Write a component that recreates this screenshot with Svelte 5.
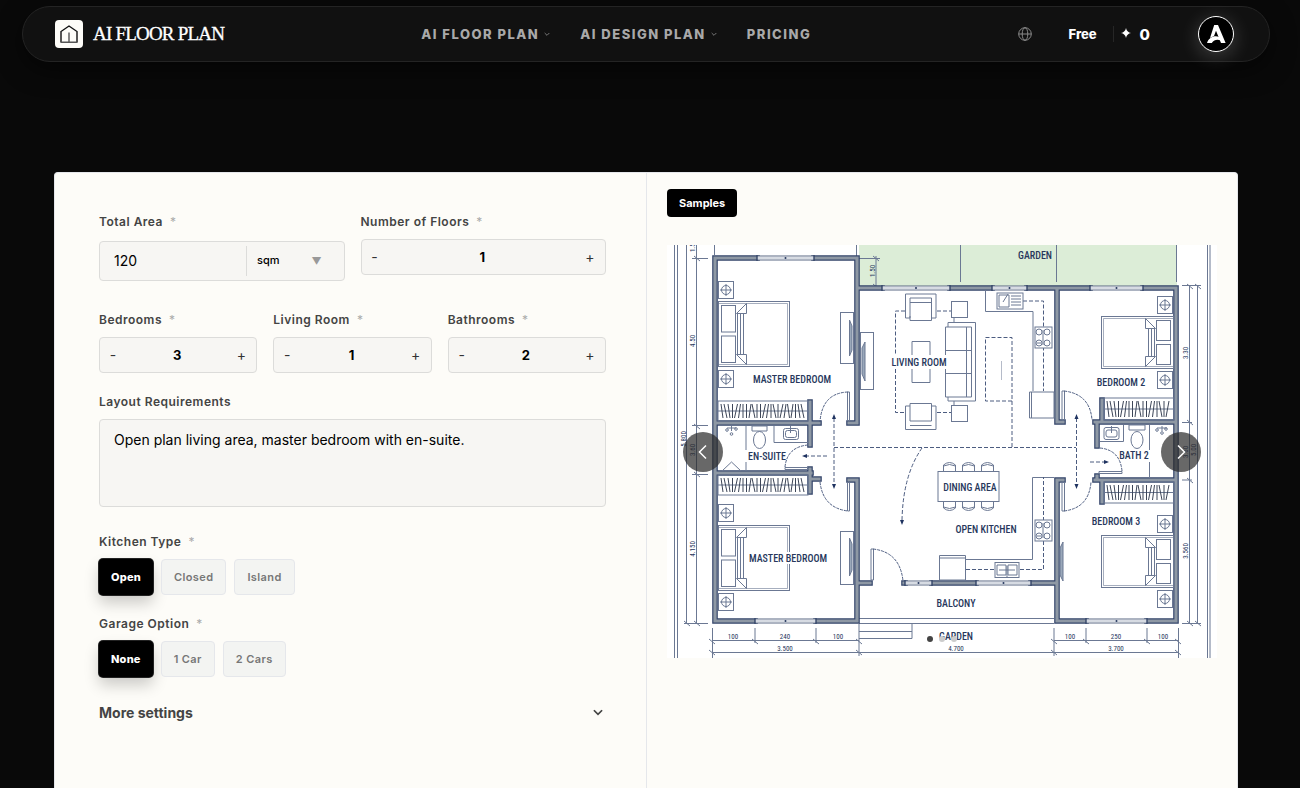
<script lang="ts">
    type Stepper = { id: string; label: string; value: number };

    const NAV = [
        { label: 'AI FLOOR PLAN', menu: true },
        { label: 'AI DESIGN PLAN', menu: true },
        { label: 'PRICING', menu: false },
    ];
    const KITCHENS = ['Open', 'Closed', 'Island'];
    const GARAGES = ['None', '1 Car', '2 Cars'];

    let area     = $state('120');
    let unit     = $state('sqm');
    let floors   = $state<Stepper>({ id: 'floors', label: 'Number of Floors', value: 1 });
    let rooms    = $state<Stepper[]>([
        { id: 'bedrooms', label: 'Bedrooms', value: 3 },
        { id: 'living', label: 'Living Room', value: 1 },
        { id: 'bathrooms', label: 'Bathrooms', value: 2 },
    ]);
    let layout   = $state('Open plan living area, master bedroom with en-suite.');
    let kitchen  = $state('Open');
    let garage   = $state('None');
    let slide    = $state(0);
    let moreOpen = $state(false);

    // Floor plan drawing data, in plan units
    const WALLS = [
        'M755 621H715V258H757M814 258H857V423H849M849 480H857V621H816',
        'M715 423H819M810 402V445M715 473H811M810 469V492M811 479H819',
        'M857 288H882M950 288H992M1027 288H1090M1143 288H1176V621H1147M1086 621H1057V480H1063',
        'M1057 288V422H1063M1095 422H1176M1097 422V446M1102 400V422',
        'M1095 480H1176M1097 476V480M1102 480V502',
        'M857 583H870M904 583H905M932 583H976M1031 583H1057',
    ].join('');
    const WINDOWS = [
        [757, 258, 57], [755, 621, 61], [882, 288, 68], [992, 288, 35],
        [1090, 288, 53], [1086, 621, 61], [905, 583, 27], [976, 583, 55],
    ];
    const TABLES = [
        [726, 290], [726, 379], [726, 513], [726, 602],
        [1165, 305], [1165, 380], [1165, 524], [1165, 599],
    ];
    const ROOMS = [
        ['MASTER BEDROOM', 792, 383], ['MASTER BEDROOM', 788, 562], ['LIVING ROOM', 919, 366],
        ['BEDROOM 2', 1121, 386], ['BEDROOM 3', 1116, 525], ['EN-SUITE', 767, 460],
        ['BATH 2', 1134, 459], ['DINING AREA', 970, 491], ['OPEN KITCHEN', 986, 533],
        ['BALCONY', 956, 607], ['GARDEN', 1035, 259], ['GARDEN', 956, 640],
    ] as [string, number, number][];
    const SIZES = [
        ['100', 733, 639], ['240', 785, 639], ['100', 838, 639], ['3.500', 785, 651],
        ['4.700', 956, 651], ['100', 1070, 639], ['250', 1116, 639], ['100', 1163, 639],
        ['3.700', 1116, 651],
    ] as [string, number, number][];
    const HEIGHTS = [
        ['1.50', 695, 246], ['4.50', 695, 341], ['5.800', 686, 439], ['3.60', 695, 450],
        ['4.150', 695, 549], ['1.50', 875, 271], ['3.30', 1188, 353], ['3.60', 1188, 452],
        ['5.00', 1196, 450], ['3.560', 1188, 551],
    ] as [string, number, number][];
    const TICKS = [
        [697, 258], [697, 426], [697, 474], [697, 623], [687, 623], [1190, 286], [1198, 286],
        [1190, 422], [1190, 480], [1190, 623], [1198, 623], [712, 641], [755, 641], [816, 641],
        [859, 641], [712, 652], [859, 652], [1054, 641], [1086, 641], [1147, 641], [1178, 641],
        [1054, 652], [1178, 652], [876, 258], [876, 286],
    ];
    const SLANTS = [-1, -1.5, -1, 0, 1.5, 1, 0, 0, 1, -1.5, 0, 0, 1.5, 1, 0, -1.5, 0, 1.5, 1, -1, 1, 0];

    function hatch(x: number, y: number, w: number, h: number) {
        const n = Math.floor((w - 4) / 3.5);
        let d = '';
        for (let i = 0; i < n; i++) {
            const s = SLANTS[i % SLANTS.length];
            d += `M${x + 4 + i * 3.5 + s} ${y + 3}L${x + 4 + i * 3.5 - s} ${y + h - 3}`;
        }
        return d;
    }

    function step(item: Stepper, by: number) {
        item.value = Math.max(0, item.value + by);
    }
</script>

{#snippet label(text: string, target: string, required = true)}
    <label class="label" for={target}>
        {text}{#if required}<span class="required">*</span>{/if}
    </label>
{/snippet}

{#snippet stepper(item: Stepper)}
    <div class="field">
        {@render label(item.label, item.id)}
        <div class="stepper">
            <button aria-label="Fewer {item.label}" onclick={() => step(item, -1)}>-</button>
            <input id={item.id} type="text" inputmode="numeric" bind:value={item.value} />
            <button aria-label="More {item.label}" onclick={() => step(item, 1)}>+</button>
        </div>
    </div>
{/snippet}

{#snippet bed(x: number, y: number, w: number, h: number, flip: boolean)}
    <g transform={flip ? `translate(${x + w} ${y}) scale(-1 1)` : `translate(${x} ${y})`}>
        <rect width={w} height={h} />
        <path d="M0 2H{w - 2}V{h - 2}H0" opacity="0.6" />
        <rect x="3" y="4" width="14" height={h / 2 - 6} />
        <rect x="3" y={h / 2 + 2} width="14" height={h / 2 - 6} />
        <path d="M19 12V{h - 12}M22 12V{h - 12}M25 12V{h - 12}M18 12L28 2V12ZM18 {h - 12}L28 {h - 2}V{h - 12}Z" />
    </g>
{/snippet}

{#snippet wardrobe(x: number, y: number, w: number, h: number)}
    <rect {x} {y} width={w} height={h} />
    <path d="M{x} {y + h / 2}H{x + w}" />
    <path d={hatch(x, y, w, h)} stroke="#3d4658" />
{/snippet}

{#snippet stove(x: number, y: number)}
    <rect {x} {y} width="17" height="21" fill="#fff" />
    {#each [[4, 5], [12, 5], [4, 16], [12, 16]] as [cx, cy]}
        <circle cx={x + cx} cy={y + cy} r="3" />
    {/each}
    <path d="M{x + 8} {y + 3}V{y + 18}M{x + 2} {y + 16}H{x + 6}" />
{/snippet}

{#snippet chevron(size: number)}
    <svg class="chevron" width={size} height={size} viewBox="0 0 24 24" aria-hidden="true">
        <path d="M5 9l7 7 7-7" />
    </svg>
{/snippet}

<div class="page">
    <header class="topbar">
        <a class="brand" href="#home">
            <svg width="28" height="28" viewBox="0 0 28 28" aria-hidden="true">
                <rect width="28" height="28" rx="4" fill="#fdfcf8" />
                <path d="M6 22.3V11.5L14 6l8 5.500V22.300" fill="none" stroke="#111" stroke-width="1.400" />
                <path d="M5.500 22.300h17M14 12.500v9.500" fill="none" stroke="#555" stroke-width="1.400" />
            </svg>
            <span>AI FLOOR PLAN</span>
        </a>

        <nav class="nav">
            {#each NAV as item}
                <a href="#{item.label.toLowerCase().replaceAll(' ', '-')}">
                    {item.label}
                    {#if item.menu}{@render chevron(8)}{/if}
                </a>
            {/each}
        </nav>

        <div class="account">
            <button class="globe" aria-label="Language">
                <svg width="14" height="14" viewBox="0 0 14 14" aria-hidden="true">
                    <circle cx="7" cy="7" r="6.300" />
                    <ellipse cx="7" cy="7" rx="2.800" ry="6.300" />
                    <path d="M0.700 7h12.600" />
                </svg>
            </button>
            <a class="plan" href="#plan">Free</a>
            <div class="credits">
                <svg width="10" height="12" viewBox="0 0 10 12" aria-hidden="true">
                    <path d="M5 0Q5.800 4.200 10 5Q5.800 5.800 5 10Q4.200 5.800 0 5Q4.200 4.200 5 0Z" fill="#fff" />
                </svg>
                <span>0</span>
            </div>
            <button class="avatar" aria-label="Account">
                <svg width="34" height="34" viewBox="0 0 34 34" aria-hidden="true">
                    <path d="M15.200 8h3.800l7.600 18h-4.600l-5-12.300-2 5.200-4 2z" />
                    <path d="M8 26c2.200-6.800 10-9 15.500-4l1.500 4c-4.200-4.400-9.200-4.400-12.200 0z" />
                </svg>
            </button>
        </div>
    </header>

    <main class="card">
        <form class="settings" onsubmit={(e) => e.preventDefault()}>
            <div class="row two">
                <div class="field area">
                    {@render label('Total Area', 'area')}
                    <div class="area-box">
                        <input id="area" type="text" bind:value={area} />
                        <div class="unit">
                            <select aria-label="Unit" bind:value={unit}>
                                <option value="sqm">sqm</option>
                                <option value="sqft">sqft</option>
                            </select>
                            <span class="arrow">▼</span>
                        </div>
                    </div>
                </div>
                {@render stepper(floors)}
            </div>

            <div class="row three">
                {#each rooms as room}
                    {@render stepper(room)}
                {/each}
            </div>

            <div class="field layout">
                {@render label('Layout Requirements', 'layout', false)}
                <textarea id="layout" bind:value={layout}></textarea>
            </div>

            <div class="field" role="group" aria-labelledby="kitchen-label">
                <span class="label" id="kitchen-label">Kitchen Type<span class="required">*</span></span>
                <div class="choices">
                    {#each KITCHENS as option}
                        <button type="button" class:active={kitchen === option} aria-pressed={kitchen === option} onclick={() => kitchen = option}>{option}</button>
                    {/each}
                </div>
            </div>

            <div class="field" role="group" aria-labelledby="garage-label">
                <span class="label" id="garage-label">Garage Option<span class="required">*</span></span>
                <div class="choices">
                    {#each GARAGES as option}
                        <button type="button" class:active={garage === option} aria-pressed={garage === option} onclick={() => garage = option}>{option}</button>
                    {/each}
                </div>
            </div>

            <button type="button" class="more" aria-expanded={moreOpen} onclick={() => moreOpen = !moreOpen}>
                More settings
                {@render chevron(14)}
            </button>
        </form>

        <section class="preview">
            <button class="tab">Samples</button>

            <div class="carousel">
                <svg class="plan-drawing" viewBox="667 245 550 413" role="img" aria-label="Sample floor plan">
                    <rect x="667" y="245" width="550" height="413" fill="#fff" />
                    <rect x="859" y="245" width="318" height="41" fill="#dcedd7" />

                    <!-- sheet frame and dimension lines -->
                    <g class="thin">
                        <path d="M674.500 245V658M677.500 245V658M1207.500 245V658M1210 245V658" />
                        <path d="M686.500 245V624M696.500 245V624M1189.500 286V624M1197.500 286V624" />
                        <path d="M692 258.500H708M692 425.500H708M692 474.500H708M684 623.500H708M1182 285.500H1201M1182 422.500H1192M1182 480H1192M1182 623.500H1201" />
                        <path d="M712 640.500H859M1054 640.500H1178M712 652.500H1178M712.500 628V658M859 624V656M1054 628V656M1178.500 628V658" />
                        <path d="M755 628V643M816 628V643M1086 628V643M1147 628V643" />
                        <path d="M960.500 245V282M1056.500 245V282M1176.500 245V282M856.500 245V256M714.500 245V255M859 258.500H880M876 256V288" />
                        <path d="M859 618.500H1054M859 623.500H1054M859 631.500H912M859 638.500H912V624" />
                        {#each TICKS as [x, y]}
                            <path d="M{x - 3} {y - 2}L{x + 3} {y + 3}" />
                        {/each}
                    </g>

                    <!-- walls and windows -->
                    <path d={WALLS} fill="none" stroke="#33446a" stroke-width="5.600" stroke-linecap="square" stroke-linejoin="miter" />
                    <path d={WALLS} fill="none" stroke="#8e98a4" stroke-width="3.200" stroke-linecap="square" />
                    {#each WINDOWS as [x, y, w]}
                        <rect {x} y={y - 2} width={w} height="4" fill="#fff" stroke="#5a6884" />
                        <path d="M{x} {y}H{x + w}" stroke="#9aa5b8" stroke-width="0.800" />
                        <path d="M{x} {y - 3}V{y + 3}M{x + w} {y - 3}V{y + 3}" stroke="#27395f" />
                        <circle cx={x + w / 2} cy={y} r="1" fill="#27395f" />
                    {/each}

                    <!-- furniture -->
                    <g class="thin">
                        {@render bed(718.5, 301.5, 71, 65, false)}
                        {@render bed(718.5, 525.5, 71, 65, false)}
                        {@render bed(1101.5, 316.5, 72, 52, true)}
                        {@render bed(1101.5, 535.5, 72, 52, true)}
                        <rect x="786" y="552" width="6" height="12" fill="#fff" stroke="none" />
                        {#each TABLES as [x, y]}
                            <rect x={x - 7.5} y={y - 8.5} width="15" height="17" />
                            <circle cx={x} cy={y} r="4.500" />
                            <path d="M{x - 6} {y}H{x + 6}M{x} {y - 6}V{y + 6}" />
                        {/each}
                        {@render wardrobe(718, 401, 90, 20)}
                        {@render wardrobe(718, 475, 90, 20)}
                        {@render wardrobe(1104, 398, 70, 22)}
                        {@render wardrobe(1104, 482, 70, 21)}

                        <rect x="840.500" y="312.500" width="13" height="51" />
                        <rect x="840.500" y="531.500" width="13" height="53" />
                        <rect x="860.500" y="332.500" width="13" height="57" />
                        <path d="M849.500 320V356L852 350V326ZM849.500 538V576L852 570V544ZM865 342V381L862 374V348ZM1063 542V581L1060 575V548Z" fill="#9aa8ba" />

                        <!-- living room -->
                        <path d="M905.500 294H936V318H931.500V298H910V318H905.500ZM910 302.500H931.500M910 316V320.500H931.500V316" />
                        <path d="M905.500 429.500H936V406H931.500V421H910V406H905.500ZM910 406V403.500H931.500V406M910 425.500H931.500" />
                        <path d="M912 355V341.500H930V355M912 369V382.500H930V369" />
                        <rect x="951.500" y="301.500" width="16" height="16" />
                        <rect x="951.500" y="405.500" width="16" height="16" />
                        <path d="M948 327V322.500H975.500V401H948V397M954 318V322M954 401V405" />
                        <path d="M945.500 355V327H971.500V397H945.500V369M966.500 327V397M945.500 350.500H971.500M945.500 373.500H971.500" />
                        <path class="dash" d="M905 311H895.500V355M895.500 369V412.500H905M937 311H951M937 412.500H951" />

                        <!-- kitchens -->
                        <path d="M985.500 290V311.500H1033V391" />
                        <path d="M1001.500 361V380" opacity="0.500" />
                        <path class="dash" d="M1023 301H1043.500V391M985.500 337.500H1012V401H985.500ZM1012 401V447" />
                        <rect x="997" y="293" width="26" height="16" />
                        <path d="M999 295H1009V307H999ZM1011 296H1021M1011 299H1021M1011 302H1021M1011 305H1021M1003 302L1008 294" />
                        {@render stove(1035, 327)}
                        <path d="M1029.500 392H1054V418H1029.500ZM1031.500 392V418" />
                        <path d="M1054 477.500H1032.500V559.500H966" />
                        <path class="dash" d="M966 569.500H1043.500V477" />
                        {@render stove(1035, 520)}
                        <path d="M939.500 555.500H965.500V580H939.500ZM939.500 558H965.500" />
                        <rect x="995" y="562.500" width="24" height="15" fill="#fff" />
                        <path d="M997 565H1006V575H997ZM1008 565H1017V575H1008ZM999 570H1015M1007 566V577" />

                        <!-- dining -->
                        <rect x="938" y="471.500" width="61" height="30" />
                        {#each [949.5, 968.5, 987.5] as x}
                            <path d="M{x - 6} 471V465Q{x} 460 {x + 6} 465V471M{x - 6} 466Q{x} 463 {x + 6} 466" />
                            <path d="M{x - 6} 502V508Q{x} 513 {x + 6} 508V502M{x - 6} 507Q{x} 510 {x + 6} 507" />
                        {/each}

                        <!-- bathrooms -->
                        <path d="M746 426V450M746 462V471M722 471L731.500 462L741 471M774 426V442.500H809M1123.500 425V441.500H1100M1149.500 425V450M1149.500 462V478" />
                        <rect x="783.500" y="428.500" width="15" height="11" rx="2" />
                        <rect x="785.500" y="430.500" width="11" height="7" rx="2" />
                        <path d="M790.500 426V433M1111.500 426V433" />
                        <rect x="1104" y="427.500" width="15" height="12" rx="2" />
                        <rect x="1106" y="430" width="11" height="7" rx="2" />
                        <path d="M752 426H767V431H752ZM1129 425H1145V430H1129Z" />
                        <ellipse cx="759.500" cy="440" rx="6" ry="8.500" />
                        <ellipse cx="1137" cy="440" rx="6" ry="8.500" />
                        <path d="M731.500 426V431M727 428H736M1162 426V431M1157 428H1167" />
                        {#each [[727, 430], [731.5, 434], [736, 429], [1157, 430], [1162, 433], [1166, 429]] as [x, y]}
                            <circle cx={x} cy={y} r="1.300" />
                        {/each}

                        <!-- doors -->
                        <path d="M847.500 392H849.500V421H847.500ZM847.500 482H849.500V511H847.500ZM1062 391H1064.500V420H1062ZM1062 482H1064.500V511H1062ZM785 467.500H808V469.500H785ZM1099 471.500H1122V473.500H1099ZM871 549H873.500V580H871Z" />
                        <path class="door" d="M848 392Q822 393 820 422M820 482Q823 508 848 511M1064 391Q1090 394 1092 420M1064 511Q1089 508 1091 482M785 467Q787 447 808 445M1122 471Q1120 450 1100 448M873 549Q900 552 903 581" />
                    </g>

                    <!-- circulation arrows -->
                    <path class="dash" d="M834 418V485M1076.500 418V485M834 447.500H1076M827 456H806M1090 462H1105M922 448Q903 475 902 520" />
                    <path d="M832 419L834 414L836 419ZM832 484L834 489L836 484ZM1074.500 419L1076.500 414L1078.500 419ZM1074.500 484L1076.500 489L1078.500 484ZM807 454L802 456L807 458ZM1104 460L1109 462L1104 464ZM900 520L902 525L904 520Z" fill="#1f3360" />

                    <g class="room-names">
                        {#each ROOMS as [name, x, y]}
                            <text {x} {y}>{name}</text>
                        {/each}
                    </g>
                    <g class="dimensions">
                        {#each SIZES as [size, x, y]}
                            <text {x} {y}>{size}</text>
                        {/each}
                        {#each HEIGHTS as [size, x, y]}
                            <text transform="translate({x} {y}) rotate(-90)">{size}</text>
                        {/each}
                    </g>
                </svg>

                <button class="arrow-btn prev" aria-label="Previous sample" onclick={() => slide = (slide + 2) % 3}>
                    <svg width="20" height="20" viewBox="0 0 20 20" aria-hidden="true"><path d="M13 3.500L6.500 10l6.500 6.500" /></svg>
                </button>
                <button class="arrow-btn next" aria-label="Next sample" onclick={() => slide = (slide + 1) % 3}>
                    <svg width="20" height="20" viewBox="0 0 20 20" aria-hidden="true"><path d="M7 3.500l6.500 6.500L7 16.500" /></svg>
                </button>
                <div class="dots">
                    {#each [0, 1, 2] as i}
                        <button class:current={slide === i} aria-label="Sample {i + 1}" onclick={() => slide = i}></button>
                    {/each}
                </div>
            </div>
        </section>
    </main>
</div>

<style>
:global(body) {
    background: #090909;
    font-family: Inter, "Liberation Sans", sans-serif;
}

.page, .page * {
    box-sizing: border-box;
}

.page {
    min-height: 100vh;
    display: flex;
    flex-direction: column;
    padding: 6px 8px 0 0;
}

button, input, select, textarea {
    font-family: inherit;
    margin: 0;
}

button {
    cursor: pointer;
}

/* ── Top bar ── */
.topbar {
    height: 56px;
    margin: 0 22px;
    padding: 0 35px 0 32px;
    display: flex;
    align-items: center;
    justify-content: space-between;
    background: #111;
    border: 1px solid #242424;
    border-radius: 28px;
    box-shadow: 0 8px 24px rgba(0, 0, 0, 0.5);
}

.brand {
    display: flex;
    align-items: center;
    gap: 10px;
    color: #fff;
    font-family: "Liberation Serif", serif;
    font-size: 19px;
    letter-spacing: -0.8px;
    text-decoration: none;
    -webkit-text-stroke: 0.3px #fff;
}

.nav {
    display: flex;
    gap: 29px;
}

.nav a {
    display: flex;
    align-items: center;
    gap: 4px;
    color: #a9a9a9;
    font-size: 13px;
    font-weight: 800;
    line-height: 16px;
    letter-spacing: 1.5px;
    text-decoration: none;
}

.chevron path {
    fill: none;
    stroke: currentColor;
    stroke-width: 3;
}

.nav .chevron {
    color: #777;
}

.account {
    display: flex;
    align-items: center;
    color: #fff;
}

.globe {
    display: flex;
    padding: 10px;
    background: none;
    border: 0;
}

.globe svg {
    fill: none;
    stroke: #8a8a8a;
}

.plan {
    margin-left: 26px;
    color: #fff;
    font-size: 13px;
    font-weight: 800;
    text-decoration: none;
}

.credits {
    display: flex;
    align-items: center;
    gap: 9px;
    height: 16px;
    margin: 0 48px 0 16px;
    padding-left: 7px;
    border-left: 1px solid #262626;
    font-size: 15px;
    font-weight: 800;
}

.avatar {
    width: 36px;
    height: 36px;
    padding: 0;
    background: #000;
    border: 1px solid #fff;
    border-radius: 50%;
    box-shadow: 0 4px 20px rgba(255, 255, 255, 0.2);
}

.avatar svg {
    display: block;
    fill: #fff;
}

/* ── Card ── */
.card {
    flex: 1;
    display: grid;
    grid-template-columns: 1fr 1fr;
    margin: 110px 54px 0;
    background: #fdfcf8;
    border: 1px solid #e5e7eb;
    border-bottom: 0;
    border-radius: 4px 4px 0 0;
}

.settings {
    display: flex;
    flex-direction: column;
    gap: 20px;
    min-width: 0;
    padding: 40px 40px 40px 44px;
}

.row {
    display: grid;
    gap: 16px;
}

.two {
    grid-template-columns: 1fr 1fr;
    margin-bottom: 10px;
}

.three {
    grid-template-columns: repeat(3, 1fr);
}

.field {
    display: flex;
    flex-direction: column;
    gap: 8px;
    min-width: 0;
}

.field.area {
    gap: 10px;
}

.field.layout {
    margin-bottom: 6px;
}

.label {
    color: #444;
    font-size: 12px;
    font-weight: 600;
    line-height: 18px;
    letter-spacing: 0.5px;
}

.required {
    margin-left: 7px;
    color: #aaa;
    font-weight: 400;
}

.area-box,
.stepper,
textarea {
    background: #f7f6f3;
    border: 1px solid #dcdcda;
    border-radius: 4px;
}

.area-box {
    display: grid;
    grid-template-columns: 3fr 2fr;
    align-items: center;
    height: 40px;
}

.area-box input {
    min-width: 0;
    padding: 0 14px 1px;
    background: none;
    border: 0;
    font-size: 14px;
}

.unit {
    position: relative;
    border-left: 1px solid #dcdcda;
}

.unit select {
    width: 100%;
    height: 30px;
    padding: 0 10px 2px;
    appearance: none;
    background: none;
    border: 0;
    color: #000;
    font-size: 11px;
    font-weight: 500;
}

.arrow {
    position: absolute;
    top: 50%;
    right: 22px;
    color: #999;
    font-size: 10px;
    line-height: 14px;
    transform: translateY(-50%);
    pointer-events: none;
}

.stepper {
    display: flex;
    height: 36px;
}

.stepper button {
    width: 28px;
    padding: 0 2px 2px 0;
    background: none;
    border: 0;
    color: #333;
    font-size: 14px;
}

.stepper input {
    flex: 1;
    min-width: 0;
    padding: 0 2px 1px 0;
    background: none;
    border: 0;
    color: #000;
    font-size: 13px;
    font-weight: 700;
    text-align: center;
}

textarea {
    display: block;
    height: 88px;
    padding: 10px 14px;
    color: #000;
    font-size: 14px;
    line-height: 20px;
    resize: none;
}

/* ── Choice buttons ── */
.choices {
    display: flex;
    gap: 8px;
}

.choices button {
    height: 36px;
    padding: 0 12px;
    background: #f3f4f2;
    border: 1px solid #e5e7eb;
    border-radius: 4px;
    color: #777;
    font-size: 11px;
    font-weight: 600;
    letter-spacing: 0.4px;
}

.choices button.active {
    background: #000;
    border: 0;
    color: #fff;
    font-weight: 800;
    letter-spacing: 0.2px;
    box-shadow: 0 0 0 1px #222, 0 8px 15px rgba(0, 0, 0, 0.2);
}

.more {
    display: flex;
    align-items: center;
    justify-content: space-between;
    height: 30px;
    padding: 0 1px 0 0;
    background: none;
    border: 0;
    color: #444;
    font-size: 14px;
    font-weight: 700;
}

/* ── Preview ── */
.preview {
    min-width: 0;
    padding: 16px 20px;
    border-left: 1px solid #e5e7eb;
}

.tab {
    display: block;
    height: 28px;
    padding: 0 12px;
    background: #000;
    border: 0;
    border-radius: 4px;
    color: #fff;
    font-size: 11px;
    font-weight: 700;
}

.carousel {
    position: relative;
    margin-top: 28px;
}

.plan-drawing {
    display: block;
    width: 100%;
    height: auto;
}

.thin {
    fill: none;
    stroke: #6b7893;
    stroke-width: 1;
}

.dash,
.door {
    fill: none;
    stroke: #4c5c80;
    stroke-dasharray: 4 2;
}

.door {
    stroke-dasharray: 3 1;
}

.room-names text,
.dimensions text {
    fill: #27375c;
    font-family: "Roboto Condensed", Roboto, "Liberation Sans", sans-serif;
    font-size: 10px;
    font-weight: 500;
    text-anchor: middle;
}

.dimensions text {
    font-size: 7px;
    font-weight: 400;
}

.arrow-btn {
    position: absolute;
    top: 50%;
    display: flex;
    align-items: center;
    justify-content: center;
    width: 40px;
    height: 40px;
    margin-top: -20px;
    padding: 0;
    background: rgba(40, 40, 40, 0.7);
    border: 0;
    border-radius: 50%;
}

.arrow-btn path {
    fill: none;
    stroke: #fff;
    stroke-width: 1.5;
}

.prev { left: 16px; }
.next { right: 16px; }

.dots {
    position: absolute;
    bottom: 16px;
    left: 50%;
    display: flex;
    gap: 6px;
    transform: translateX(-50%);
}

.dots button {
    width: 6px;
    height: 6px;
    padding: 0;
    background: #ccc;
    border: 0;
    border-radius: 50%;
}

.dots button.current {
    background: #444;
}
</style>
